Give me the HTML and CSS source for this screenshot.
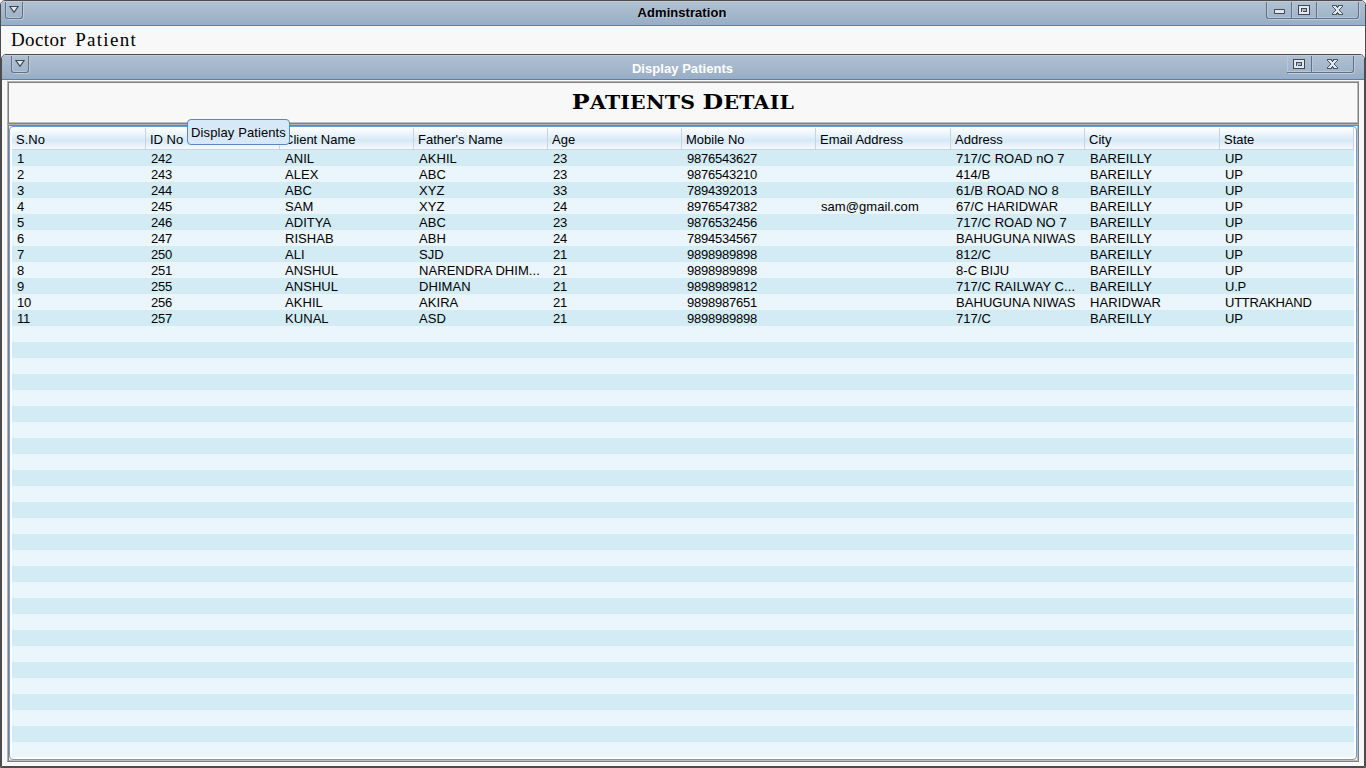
FILE: index.html
```html
<!DOCTYPE html>
<html lang="en">
<head>
<meta charset="utf-8">
<title>Adminstration</title>
<link rel="stylesheet" href="styles.css">
</head>
<body>
<svg class="symbols" width="0" height="0">
  <symbol id="tri" viewBox="0 0 10 7"><path d="M.9.5H9.100L5 6.300Z" fill="#e4e9ee" stroke="#3d4854" stroke-width="1.200"/></symbol>
  <symbol id="min" viewBox="0 0 11 5"><path d="M.5.5H10.500V4.500H.5Z" fill="#e4e9ee" stroke="#3d4854"/></symbol>
  <symbol id="max" viewBox="0 0 12 10"><g shape-rendering="crispEdges"><path d="M0 0H12V10H0Z" fill="#3d4854"/><path d="M1 1H11V9H1Z" fill="#e4e9ee"/><path d="M3 3H9V7H5V6H4V7H3Z" fill="#3d4854"/><path d="M4 4H8V6H4Z" fill="#a9bbce"/></g></symbol>
  <symbol id="close" viewBox="0 0 11 10"><g shape-rendering="crispEdges"><path d="M0 0H5V1H6V0H11V2H10V3H9V4H8V6H9V7H10V8H11V10H6V9H5V10H0V8H1V7H2V6H3V4H2V3H1V2H0Z" fill="#4a5663"/><path d="M1 1H4V2H5V3H6V2H7V1H10V2H9V3H8V4H7V6H8V7H9V8H10V9H7V8H6V7H5V8H4V9H1V8H2V7H3V6H4V4H3V3H2V2H1Z" fill="#e4e9ee"/></g></symbol>
</svg>
<div class="window">
  <header class="titlebar">
    <span class="btn menu-btn"><svg width="10" height="7"><use href="#tri"/></svg></span>
    <h1 class="title">Adminstration</h1>
    <div class="controls">
      <span class="btn min"><svg width="11" height="5"><use href="#min"/></svg></span>
      <span class="btn max"><svg width="12" height="10"><use href="#max"/></svg></span>
      <span class="btn close"><svg width="11" height="10"><use href="#close"/></svg></span>
    </div>
  </header>
  <nav class="menubar"><span>Doctor</span><span class="wide">Patient</span></nav>
  <section class="frame">
    <header class="titlebar inner">
      <span class="btn menu-btn"><svg width="10" height="7"><use href="#tri"/></svg></span>
      <h2 class="title">Display Patients</h2>
      <div class="controls">
        <span class="btn max"><svg width="12" height="10"><use href="#max"/></svg></span>
        <span class="btn close"><svg width="11" height="10"><use href="#close"/></svg></span>
      </div>
    </header>
    <div class="banner"><p class="heading"><span class="cap">P</span>atients <span class="cap">D</span>etail</p></div>
    <div class="panel">
      <div class="scroll">
        <table class="grid">
          <colgroup><col class="c1"><col class="c1"><col class="c1"><col class="c1"><col class="c1"><col class="c1"><col class="c2"><col class="c1"><col class="c2"><col class="c1"></colgroup>
          <thead><tr><th>S.No</th><th>ID No</th><th>Client Name</th><th>Father's Name</th><th>Age</th><th>Mobile No</th><th>Email Address</th><th>Address</th><th>City</th><th>State</th></tr></thead>
          <tbody>
            <tr><td>1</td><td>242</td><td>ANIL</td><td>AKHIL</td><td>23</td><td>9876543627</td><td></td><td>717/C ROAD nO 7</td><td>BAREILLY</td><td>UP</td></tr>
            <tr><td>2</td><td>243</td><td>ALEX</td><td>ABC</td><td>23</td><td>9876543210</td><td></td><td>414/B</td><td>BAREILLY</td><td>UP</td></tr>
            <tr><td>3</td><td>244</td><td>ABC</td><td>XYZ</td><td>33</td><td>7894392013</td><td></td><td>61/B ROAD NO 8</td><td>BAREILLY</td><td>UP</td></tr>
            <tr><td>4</td><td>245</td><td>SAM</td><td>XYZ</td><td>24</td><td>8976547382</td><td>sam@gmail.com</td><td>67/C HARIDWAR</td><td>BAREILLY</td><td>UP</td></tr>
            <tr><td>5</td><td>246</td><td>ADITYA</td><td>ABC</td><td>23</td><td>9876532456</td><td></td><td>717/C ROAD NO 7</td><td>BAREILLY</td><td>UP</td></tr>
            <tr><td>6</td><td>247</td><td>RISHAB</td><td>ABH</td><td>24</td><td>7894534567</td><td></td><td>BAHUGUNA NIWAS</td><td>BAREILLY</td><td>UP</td></tr>
            <tr><td>7</td><td>250</td><td>ALI</td><td>SJD</td><td>21</td><td>9898989898</td><td></td><td>812/C</td><td>BAREILLY</td><td>UP</td></tr>
            <tr><td>8</td><td>251</td><td>ANSHUL</td><td>NARENDRA DHIM...</td><td>21</td><td>9898989898</td><td></td><td>8-C BIJU</td><td>BAREILLY</td><td>UP</td></tr>
            <tr><td>9</td><td>255</td><td>ANSHUL</td><td>DHIMAN</td><td>21</td><td>9898989812</td><td></td><td>717/C RAILWAY C...</td><td>BAREILLY</td><td>U.P</td></tr>
            <tr><td>10</td><td>256</td><td>AKHIL</td><td>AKIRA</td><td>21</td><td>9898987651</td><td></td><td>BAHUGUNA NIWAS</td><td>HARIDWAR</td><td>UTTRAKHAND</td></tr>
            <tr><td>11</td><td>257</td><td>KUNAL</td><td>ASD</td><td>21</td><td>9898989898</td><td></td><td>717/C</td><td>BAREILLY</td><td>UP</td></tr>
          </tbody>
        </table>
      </div>
    </div>
  </section>
  <div class="tooltip">Display Patients</div>
</div>
</body>
</html>
```
FILE: styles.css
```css
* { box-sizing: border-box; }
body { margin: 0; background: #f8f8f8; font: 13px/16px "Liberation Sans", Arial, sans-serif; color: #000; overflow: hidden; }
.symbols { display: none; }
.window { width: 1366px; height: 768px; display: flex; flex-direction: column; border: 1px solid #4c4c4c; border-radius: 5px 5px 0 0; background: #f8f8f8; overflow: hidden; }
.titlebar { flex: none; height: 25px; display: grid; grid-template-columns: 1fr auto 1fr; align-items: start; border-top: 1px solid #c1cddc; border-bottom: 1px solid #5b7fa8; background: linear-gradient(#b0c0d1, #98aec6); padding: 0 6px 0 4px; }
.title { margin: 0; font-size: 13px; line-height: 21px; font-weight: bold; letter-spacing: .05px; text-shadow: 1px 1px #b9c8d7; }
.inner .title { color: #fff; text-shadow: none; line-height: 25px; }
.controls { display: flex; justify-content: flex-end; }
.btn { display: flex; align-items: center; justify-content: center; height: 17px; padding-bottom: 1px; border: 1px solid #5f7286; border-top: 0; box-shadow: inset 1px -1px #b9c8d9, 1px 1px #bccad9; }
.menu-btn { width: 18px; border-radius: 0 0 3px 3px; }
.min { width: 26px; border-radius: 0 0 0 3px; padding: 2px 0 0; }
.max { width: 25px; border-left: 0; }
.close { width: 42px; border-left: 0; border-radius: 0 0 3px 0; }
.menubar { flex: none; height: 28px; display: flex; gap: 9px; padding: 3px 0 0 10px; font: 19px/22px "Liberation Serif", serif; letter-spacing: .4px; }
.wide { letter-spacing: 1.3px; }
.frame { flex: 1; display: flex; flex-direction: column; border: 1px solid #4c4c4c; border-radius: 5px 5px 0 0; padding-bottom: 4px; overflow: hidden; }
.inner { padding: 0 10px 0 9px; }
.banner, .panel { margin: 0 5px; border: 1px solid; border-color: #b4b4b4 #808080 #808080 #b4b4b4; box-shadow: inset 1px 1px #808080, inset -1px -1px #bcbcbc; }
.banner { flex: none; height: 43px; margin-top: 1px; display: flex; justify-content: center; align-items: center; }
.heading { margin: 0; font: bold 18px/30px "DejaVu Serif", serif; text-transform: uppercase; letter-spacing: .2px; transform: scaleX(1.135); }
.cap { font-size: 21px; }
.panel { flex: 1; min-height: 0; padding: 1px; }
.scroll { height: 100%; border: 1px solid #6e9bd0; border-radius: 4px; padding: 1px 2px 2px; background: #fbfdff; }
.grid { width: 1342px; height: 100%; display: block; border-collapse: separate; border-spacing: 0; table-layout: fixed; background: repeating-linear-gradient(#d2ebf4 0 16px, #ebf5fc 16px 32px) 0 22px / 100% 32px; }
.c1 { width: 134px; }
.c2 { width: 135px; }
.grid th { height: 22px; padding: 2px 0 0 4px; line-height: 18px; font-weight: normal; text-align: left; background: linear-gradient(#fff, #d5e9f7 60%, #f6fafd); border-right: 1px solid #c8d4de; border-bottom: 1px solid #c8d4de; }
.grid td { height: 16px; padding: 2px 0 0 5px; line-height: 14px; white-space: nowrap; letter-spacing: -.23px; }
.grid td:nth-child(3), .grid td:nth-child(4), .grid td:nth-child(7), .grid td:nth-child(8) { letter-spacing: .06px; }
.grid td:nth-child(9) { letter-spacing: .09px; }
.tooltip { position: absolute; left: 187px; top: 119px; width: 103px; height: 26px; border: 1px solid #5f86b8; border-radius: 4px; background: #d7e9f8; text-align: center; line-height: 25px; letter-spacing: .1px; }
```
